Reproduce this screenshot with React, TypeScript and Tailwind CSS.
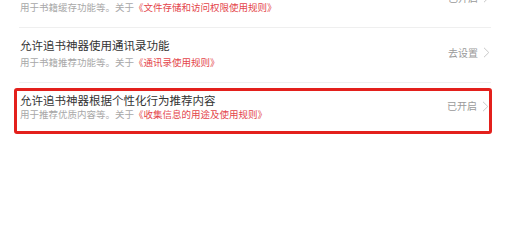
import React from "react";

const Chevron = () => (
  <svg width="7" height="11" viewBox="0 0 7 11" className="ml-[5px] shrink-0">
    <path d="M1 0.8 L5.8 5.5 L1 10.2" fill="none" stroke="#c8c8c8" strokeWidth="1" />
  </svg>
);

type RowProps = {
  title: string;
  pre: string;
  link: string;
  status: string;
};

const RowContent = ({ title, pre, link, status }: RowProps) => (
  <div className="flex items-center">
    <div className="flex flex-col flex-1 min-w-0">
      <div className="text-[11.5px] leading-[16px] text-[#333333] whitespace-nowrap">{title}</div>
      <div className="text-[9.5px] leading-[12px] text-[#a8a8a8] whitespace-nowrap">
        {pre}
        <span className="text-[#e4454b]">{link}</span>
      </div>
    </div>
    <div className="flex items-center">
      <span className="text-[10px] leading-[14px] text-[#9a9a9a] whitespace-nowrap">{status}</span>
      <Chevron />
    </div>
  </div>
);

export default function App() {
  return (
    <div
      className="w-[515px] h-[210px] bg-white overflow-hidden"
      style={{ fontFamily: '"Noto Sans CJK SC", "Noto Sans", sans-serif' }}
    >
      <div className="mx-[19px] w-[472px] mt-[-27px]">
        <div className="pl-[1px] pr-[1px] pt-[9px] pb-[14px]">
          <div className="flex items-center">
            <div className="flex flex-col flex-1 min-w-0">
              <div className="text-[11.5px] leading-[16px] text-[#333333] whitespace-nowrap">允许追书神器访问存储空间</div>
              <div className="mt-[3px] text-[9.5px] leading-[12px] text-[#a8a8a8] whitespace-nowrap">
                用于书籍缓存功能等。关于
                <span className="text-[#e4454b]">《文件存储和访问权限使用规则》</span>
              </div>
            </div>
            <div className="flex items-center">
              <span className="text-[10px] leading-[14px] text-[#9a9a9a] whitespace-nowrap">已开启</span>
              <Chevron />
            </div>
          </div>
        </div>
        <div className="h-px bg-[#efefef]" />
        <div className="pl-[1px] pr-[1px] pt-[9px] pb-[14px]">
          <div className="flex items-center">
            <div className="flex flex-col flex-1 min-w-0">
              <div className="text-[11.5px] leading-[16px] text-[#333333] whitespace-nowrap">允许追书神器使用通讯录功能</div>
              <div className="mt-[3px] text-[9.5px] leading-[12px] text-[#a8a8a8] whitespace-nowrap">
                用于书籍推荐功能等。关于
                <span className="text-[#e4454b]">《通讯录使用规则》</span>
              </div>
            </div>
            <div className="flex items-center">
              <span className="text-[10px] leading-[14px] text-[#9a9a9a] whitespace-nowrap">去设置</span>
              <Chevron />
            </div>
          </div>
        </div>
        <div className="h-px bg-[#efefef]" />
      </div>
      <div className="ml-[14px] mt-[5px] w-[478px] border-[3px] border-[#e3201c] rounded-[3px] pl-[3px] pt-[1px] pb-[11px]">
        <RowContent
          title="允许追书神器根据个性化行为推荐内容"
          pre="用于推荐优质内容等。关于"
          link="《收集信息的用途及使用规则》"
          status="已开启"
        />
      </div>
    </div>
  );
}
